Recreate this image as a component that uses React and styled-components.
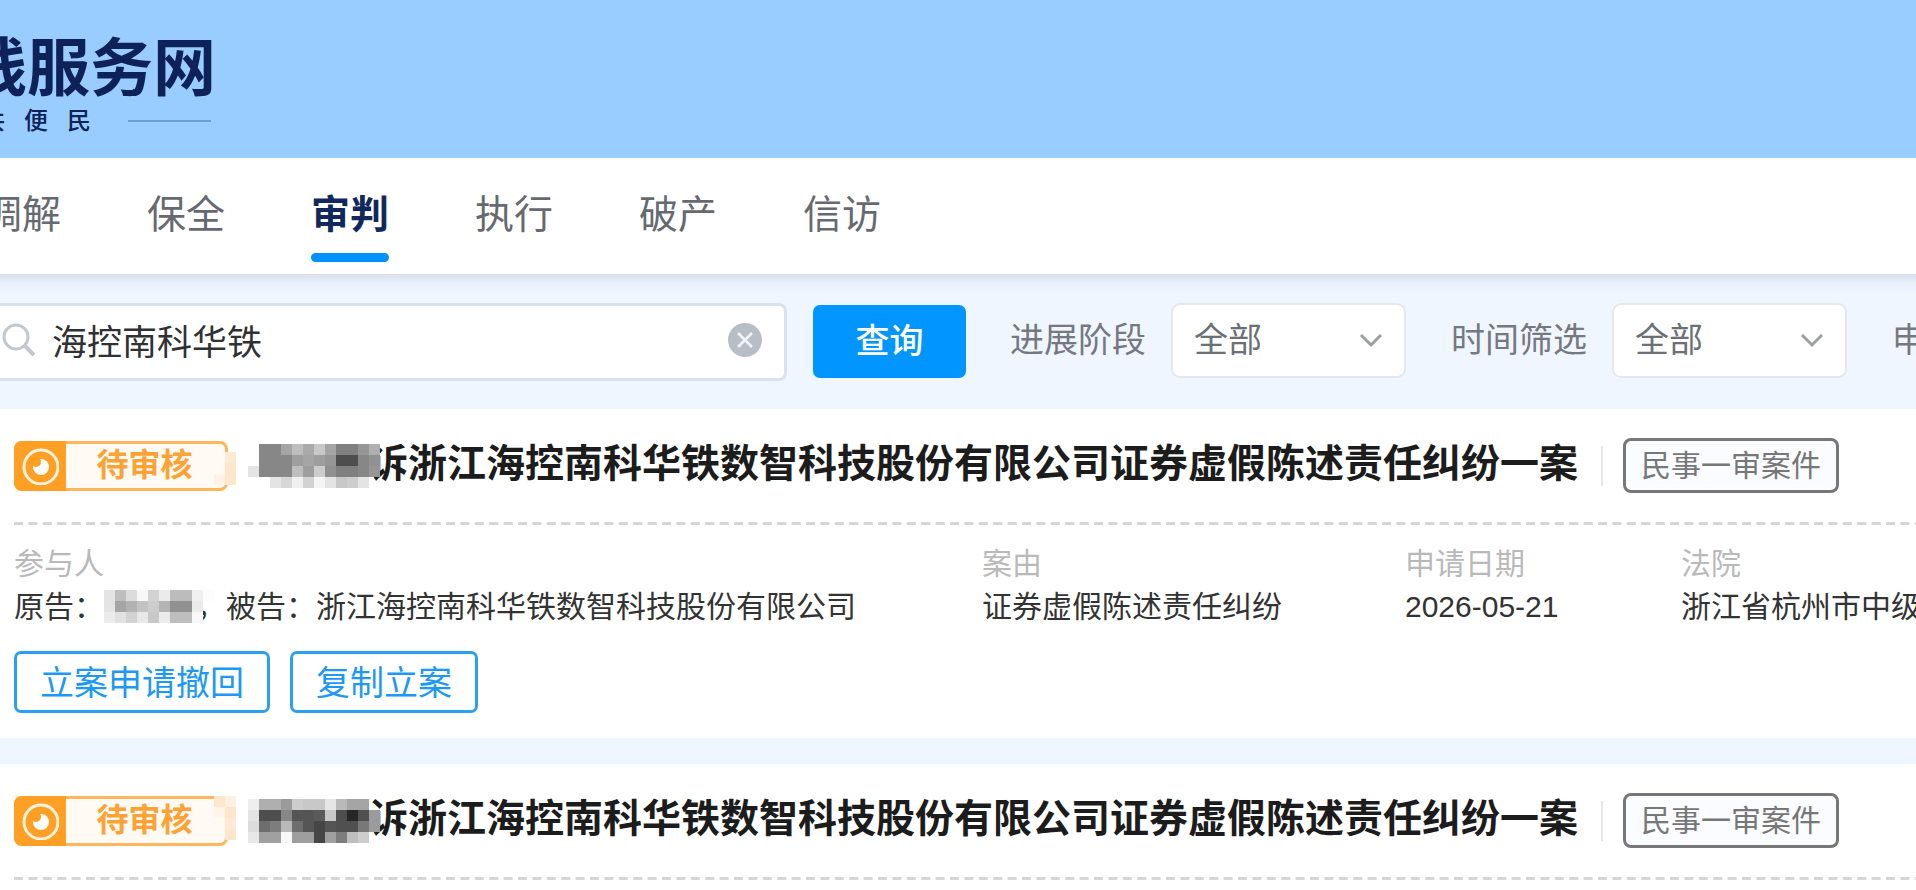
import React from 'react';
import styled, { createGlobalStyle } from 'styled-components';

const GlobalStyle = createGlobalStyle`
  * { box-sizing: border-box; }
  body {
    margin: 0;
    background: #f0f6ff;
    font-family: "Liberation Sans", "Noto Sans CJK SC", sans-serif;
    overflow: hidden;
  }
  button, input, select { font-family: inherit; }
`;

const Page = styled.div`
  min-height: 100vh;
  overflow: hidden;
`;

const Header = styled.header`
  position: relative;
  z-index: 1;
  height: 158px;
  padding-top: 24px;
  background: #99cdff;
`;

const Brand = styled.div`
  width: 217px;
  display: flex;
  flex-direction: column;
  align-items: flex-end;
  color: #0e2259;
  white-space: nowrap;
`;

const SiteName = styled.h1`
  margin: 0;
  padding-right: 1px;
  font-size: 63px;
  line-height: 88px;
  font-weight: 700;
`;

const Slogan = styled.p`
  margin: 0;
  padding-right: 6px;
  display: flex;
  align-items: center;
  gap: 19px;
  font-size: 24px;
  line-height: 18px;
  font-weight: 500;
`;

const SloganRule = styled.span`
  width: 83px;
  height: 2px;
  margin-left: 18px;
  background: #6f9fd2;
`;

const Nav = styled.nav`
  height: 116px;
  display: flex;
  gap: 86px;
  margin: 0 -20px 0 -17px;
  padding-top: 29px;
  background: #fff;
  box-shadow: 0 3px 14px rgba(60, 80, 120, 0.2);
`;

const Tab = styled.a`
  flex: none;
  font-size: 39px;
  line-height: 56px;
  text-decoration: none;
  color: ${(p) => (p.$active ? '#10285c' : '#666a70')};
  font-weight: ${(p) => (p.$active ? 700 : 400)};
  &::after {
    content: '';
    display: ${(p) => (p.$active ? 'block' : 'none')};
    height: 9px;
    margin-top: 10px;
    border-radius: 5px;
    background: #0091ff;
  }
`;

const Filters = styled.form`
  display: flex;
  align-items: center;
  height: 135px;
  white-space: nowrap;
`;

const SearchBox = styled.div`
  flex: none;
  width: 797px;
  height: 78px;
  margin-left: -10px;
  margin-right: 26px;
  padding: 0 22px 4px 9px;
  display: flex;
  align-items: center;
  gap: 17px;
  border: 3px solid #dce1ee;
  border-radius: 8px;
  background: #fff;
`;

const SearchInput = styled.input`
  flex: 1;
  min-width: 0;
  height: 60px;
  padding: 0;
  border: 0;
  outline: 0;
  background: none;
  font-size: 35px;
  color: #303133;
`;

const ClearButton = styled.button`
  display: flex;
  padding: 0;
  border: 0;
  background: none;
`;

const QueryButton = styled.button`
  flex: none;
  width: 153px;
  height: 73px;
  margin-right: 44px;
  padding: 0 0 6px;
  border: 0;
  border-radius: 7px;
  background: #0095ff;
  color: #fff;
  font-size: 34px;
  font-weight: 500;
`;

const FilterField = styled.label`
  flex: none;
  display: flex;
  align-items: center;
  gap: 25px;
  margin-right: 45px;
  padding-bottom: 2px;
  font-size: 34px;
  line-height: 76px;
  color: #75797f;
`;

const SelectWrap = styled.span`
  display: grid;
  align-items: center;
  > * { grid-area: 1 / 1; }
  > svg { justify-self: end; margin-right: 23px; pointer-events: none; }
`;

const Select = styled.select`
  appearance: none;
  width: 235px;
  height: 75px;
  padding: 0 60px 2px 21px;
  border: 2px solid #e5e7ea;
  border-radius: 9px;
  background: #fff;
  color: #6c7075;
  font-size: 34px;
`;

const FilterText = styled.span`
  margin-top: -2px;
`;

const CaseList = styled.main`
  display: flex;
  flex-direction: column;
  gap: 26px;
`;

const Card = styled.article`
  padding: 29px 0 25px 14px;
  background: #fff;
  white-space: nowrap;
`;

const CardHead = styled.div`
  display: flex;
  align-items: center;
  height: 55px;
`;

const Status = styled.span`
  position: relative;
  flex: none;
  display: flex;
  width: 214px;
  height: 50px;
  border: 3px solid #ffb55c;
  border-radius: 8px;
  background: #fffaf4;
`;

const StatusIcon = styled.span`
  flex: none;
  width: 52px;
  height: 50px;
  margin: -3px 0 0 -3px;
  display: flex;
  align-items: center;
  justify-content: center;
  border-radius: 8px 0 0 8px;
  background: #ff9f24;
`;

const StatusText = styled.span`
  flex: 1;
  padding-right: 2px;
  text-align: center;
  font-size: 32px;
  line-height: 42px;
  font-weight: 700;
  color: #ffa235;
`;

const StatusMask = styled.svg`
  position: absolute;
  left: 197px;
  top: -3px;
`;

const Title = styled.h2`
  flex: none;
  display: flex;
  align-items: center;
  margin: 0 23px 0 20px;
  font-size: 39px;
  line-height: 55px;
  font-weight: 700;
  color: #1c1c1c;
`;

const NameMask = styled.svg`
  position: relative;
  z-index: 1;
  flex: none;
  margin-right: ${(p) => p.$overlap}px;
`;

const TitleText = styled.span`
  margin-top: -5px;
`;

const Divider = styled.span`
  flex: none;
  width: 2px;
  height: 40px;
  margin-right: 20px;
  background: #e7e7e7;
`;

const Tag = styled.span`
  flex: none;
  height: 55px;
  padding: 0 15px;
  border: 3px solid #777;
  border-radius: 8px;
  background: #fafcff;
  font-size: 30px;
  line-height: 50px;
  color: #777;
`;

const Dashes = styled.svg`
  display: block;
  width: 100%;
  height: 3px;
  margin-top: 29px;
`;

const Details = styled.dl`
  display: grid;
  grid-template-columns: minmax(0, 968fr) minmax(0, 423fr) minmax(0, 276fr) minmax(0, 235fr);
  margin: 17px 0 0;
  font-size: 30px;
  line-height: 43px;
`;

const Term = styled.dt`
  color: #b9b9b9;
`;

const Value = styled.dd`
  display: flex;
  align-items: center;
  margin: 0;
  color: #333;
`;

const Actions = styled.div`
  display: flex;
  gap: 20px;
  margin-top: 23px;
`;

const ActionButton = styled.button`
  height: 62px;
  padding: 2px 23px 0;
  border: 3px solid #2b9ff5;
  border-radius: 7px;
  background: #fff;
  color: #1c98f7;
  font-size: 34px;
  line-height: 52px;
`;

const SearchIcon = () => (
  <svg width="33" height="34" viewBox="0 0 33 34" fill="none" stroke="#c3c7cf" strokeWidth="3">
    <circle cx="14" cy="14" r="12" />
    <path d="M22.5 22.5 L32 32" strokeWidth="4" />
  </svg>
);

const ClearIcon = () => (
  <svg width="34" height="34" viewBox="0 0 34 34">
    <circle cx="17" cy="17" r="17" fill="#b9bdc5" />
    <path d="M10 10 L24 24 M24 10 L10 24" stroke="#f2f4f7" strokeWidth="2.5" />
  </svg>
);

const Chevron = () => (
  <svg width="24" height="15" viewBox="0 0 24 15" fill="none" stroke="#9d9fa3" strokeWidth="3">
    <path d="M2 2 L12 12 L22 2" />
  </svg>
);

const EyeIcon = () => (
  <svg width="38" height="38" viewBox="0 0 38 38">
    <circle cx="20" cy="20" r="17" fill="none" stroke="#fff3e0" strokeWidth="3" />
    <circle cx="20" cy="20" r="8" fill="#fff" />
    <circle cx="15" cy="15" r="5" fill="#ff9f24" />
  </svg>
);

/* Each mosaic row lists the tone of its cells; null leaves a cell clear. */
const MASKS = {
  first: {
    title: [
      [null, 135, 135, 165, 190, 170, 200, 165, 128, 128, 150, 175],
      [null, 135, 135, 135, 158, 165, 158, 150, 78, 78, 135, 145],
      [228, 135, 135, 135, 190, 158, 205, 145, 128, 128, 135, 150],
      [null, null, 228, 215, 240, 210, 245, 228, 200, 205, 228, null],
    ],
    small: [
      [228, 190, 220, 248, 210, 235, 188, 188, 240, 252],
      [228, 165, 178, 195, 205, 180, 145, 145, 235, null],
      [235, 225, 210, 232, 200, 235, 190, 190, 248, null],
    ],
    badge: [
      [null, null],
      [null, '#ffe9d2'],
      [null, '#ffe6cb'],
      ['#fff3e6', '#ffe6cb'],
    ],
  },
  second: {
    title: [
      [238, 175, 175, 155, 205, 200, 200, 230, 185, 165, 165, null],
      [228, 78, 78, 135, 85, 85, 90, 200, 78, 38, 80, 155],
      [220, 110, 125, 185, 110, 85, 70, 85, 80, 80, 120, 155],
      [232, 160, 160, 248, 158, 158, 70, 160, 125, 190, 205, null],
    ],
    small: [
      [228, 190, 220, 248, 210, 235, 188, 188, 240, 252],
      [228, 165, 178, 195, 205, 180, 145, 145, 235, null],
      [235, 225, 210, 232, 200, 235, 190, 190, 248, null],
    ],
    badge: [
      ['#ffe8ce', '#fff0e0'],
      ['#fff5e8', '#ffe6cb'],
      [null, '#ffe9d2'],
      [null, '#ffe6cb'],
    ],
  },
};

const cells = (rows) =>
  rows.flatMap((row, y) =>
    row.map((tone, x) =>
      tone === null ? null : (
        <rect
          key={`${x}-${y}`}
          x={x * 11}
          y={y * 11}
          width="11"
          height="11"
          fill={typeof tone === 'string' ? tone : `rgb(${tone},${tone},${tone})`}
        />
      )
    )
  );

const TABS = ['调解', '保全', '审判', '执行', '破产', '信访'];

function FilterSelect({ label }) {
  return (
    <FilterField>
      <FilterText>{label}</FilterText>
      <SelectWrap>
        <Select defaultValue="全部">
          <option>全部</option>
        </Select>
        <Chevron />
      </SelectWrap>
    </FilterField>
  );
}

function CaseCard({ mask }) {
  return (
    <Card>
      <CardHead>
        <Status>
          <StatusIcon><EyeIcon /></StatusIcon>
          <StatusText>待审核</StatusText>
          <StatusMask width="22" height="44" shapeRendering="crispEdges">
            {cells(mask.badge)}
          </StatusMask>
        </Status>
        <Title>
          <NameMask width="132" height="44" $overlap={-11} shapeRendering="crispEdges">
            {cells(mask.title)}
          </NameMask>
          <TitleText>诉浙江海控南科华铁数智科技股份有限公司证券虚假陈述责任纠纷一案</TitleText>
        </Title>
        <Divider />
        <Tag>民事一审案件</Tag>
      </CardHead>
      <Dashes>
        <line x1="0" y1="1.5" x2="100%" y2="1.5" stroke="#d6d6d6" strokeWidth="3" strokeDasharray="9 5.4" />
      </Dashes>
      <Details>
        <div>
          <Term>参与人</Term>
          <Value>
            <span>原告：</span>
            <NameMask width="110" height="33" $overlap={-18} shapeRendering="crispEdges">
              {cells(mask.small)}
            </NameMask>
            <span>，被告：浙江海控南科华铁数智科技股份有限公司</span>
          </Value>
        </div>
        <div>
          <Term>案由</Term>
          <Value>证券虚假陈述责任纠纷</Value>
        </div>
        <div>
          <Term>申请日期</Term>
          <Value>2026-05-21</Value>
        </div>
        <div>
          <Term>法院</Term>
          <Value>浙江省杭州市中级</Value>
        </div>
      </Details>
      <Actions>
        <ActionButton type="button">立案申请撤回</ActionButton>
        <ActionButton type="button">复制立案</ActionButton>
      </Actions>
    </Card>
  );
}

export default function App() {
  return (
    <Page>
      <GlobalStyle />
      <Header>
        <Brand>
          <SiteName>线服务网</SiteName>
          <Slogan>
            <span>共</span>
            <span>便</span>
            <span>民</span>
            <SloganRule />
          </Slogan>
        </Brand>
      </Header>
      <Nav>
        {TABS.map((tab) => (
          <Tab key={tab} href="#" $active={tab === '审判'}>{tab}</Tab>
        ))}
      </Nav>
      <Filters onSubmit={(e) => e.preventDefault()}>
        <SearchBox>
          <SearchIcon />
          <SearchInput aria-label="搜索" defaultValue="海控南科华铁" />
          <ClearButton type="button" aria-label="清除"><ClearIcon /></ClearButton>
        </SearchBox>
        <QueryButton type="submit">查询</QueryButton>
        <FilterSelect label="进展阶段" />
        <FilterSelect label="时间筛选" />
        <FilterField as="span"><FilterText>申</FilterText></FilterField>
      </Filters>
      <CaseList>
        <CaseCard mask={MASKS.first} />
        <CaseCard mask={MASKS.second} />
      </CaseList>
    </Page>
  );
}
